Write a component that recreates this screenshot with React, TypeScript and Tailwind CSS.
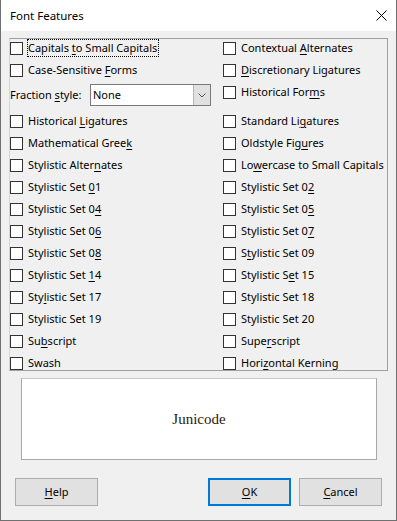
import React from "react";

type L = [string, string, string];

const left: (L | "combo")[] = [
  ["Capitals ", "t", "o Small Capitals"],
  ["Case-Sensitive ", "F", "orms"],
  "combo",
  ["Historical ", "L", "igatures"],
  ["Mathematical Gree", "k", ""],
  ["Stylistic Alter", "n", "ates"],
  ["Stylistic Set ", "0", "1"],
  ["Stylistic Set 0", "4", ""],
  ["Stylistic Set 0", "6", ""],
  ["Stylistic Set 0", "8", ""],
  ["Stylistic Set ", "1", "4"],
  ["Sty", "l", "istic Set 17"],
  ["Stylistic Set 19", "", ""],
  ["Su", "b", "script"],
  ["Swash", "", ""],
];

const right: L[] = [
  ["Contextual ", "A", "lternates"],
  ["", "D", "iscretionary Ligatures"],
  ["Historical For", "m", "s"],
  ["Standard Li", "g", "atures"],
  ["Oldstyle Fig", "u", "res"],
  ["Lo", "w", "ercase to Small Capitals"],
  ["Stylistic Set 0", "2", ""],
  ["Stylistic Set 0", "5", ""],
  ["Stylistic Set 0", "7", ""],
  ["S", "t", "ylistic Set 09"],
  ["Stylistic S", "e", "t 15"],
  ["Stylistic Set 18", "", ""],
  ["Stylistic Set 20", "", ""],
  ["Supe", "r", "script"],
  ["Hori", "z", "ontal Kerning"],
];

function Label({ l }: { l: L }) {
  return (
    <>
      {l[0]}
      {l[1] && <span className="underline decoration-1 underline-offset-[2px]">{l[1]}</span>}
      {l[2]}
    </>
  );
}

function Check({ l, focus }: { l: L; focus?: boolean }) {
  return (
    <div className="flex items-center h-[18px]">
      <span className="w-[13px] h-[13px] border border-[#333333] bg-white shrink-0" />
      <span
        className={
          "ml-[4px] pl-[1px] pr-[2px] h-[18px] leading-[18px] whitespace-nowrap " +
          (focus ? "outline-1 outline-dotted outline-black [outline-offset:-1px]" : "")
        }
      >
        <Label l={l} />
      </span>
    </div>
  );
}

function Combo() {
  return (
    <div className="flex items-start h-[25px]">
      <div className="w-[80px] h-[24px] flex items-center whitespace-nowrap">
        <span>
          {"Fraction "}
          <span className="underline decoration-1 underline-offset-[2px]">s</span>
          {"tyle:"}
        </span>
      </div>
      <div className="mt-[1px] w-[121px] h-[22px] border border-[#7a7a7a] bg-white flex">
        <div className="flex-1 flex items-center pl-[2px]">None</div>
        <div className="w-[17px] h-full bg-[#e1e1e1] border-l border-[#b5b5b5] flex items-center justify-center">
          <svg width="8" height="5" viewBox="0 0 8 5">
            <path d="M0.5 0.5 L4 4 L7.5 0.5" fill="none" stroke="#505050" strokeWidth="1" />
          </svg>
        </div>
      </div>
    </div>
  );
}

export default function App() {
  return (
    <div className="w-[397px] h-[521px] bg-[#f0f0f0] border-x border-b border-[#707070] flex flex-col text-[11px] text-black [font-family:'Noto_Sans',sans-serif]">
      <div className="h-[31px] bg-white flex items-center justify-between pl-[9px] pr-[9px] shrink-0">
        <span className="text-[11.5px]">Font Features</span>
        <svg width="11" height="11" viewBox="0 0 11 11">
          <path d="M0.5 0.5 L10.5 10.5 M10.5 0.5 L0.5 10.5" stroke="#000" strokeWidth="1" />
        </svg>
      </div>
      <div className="ml-[8px] mt-[7px] w-[379px] h-[333px] border border-[#a0a0a0] border-l-[#d6d6d6] overflow-hidden flex flex-col gap-[4px] shrink-0">
        {left.map((lv, i) => (
          <div key={i} className={"grid grid-cols-[213px_1fr] shrink-0 " + (lv === "combo" ? "h-[25px]" : "h-[18px]")}>
            <div>{lv === "combo" ? <Combo /> : <Check l={lv} focus={i === 0} />}</div>
            <div>
              <Check l={right[i]} />
            </div>
          </div>
        ))}
      </div>
      <div className="ml-[20px] mt-[7px] w-[356px] h-[82px] bg-white border border-[#a8a8a8] border-t-[#c8c8c8] flex items-center justify-center shrink-0">
        <span className="text-[15px] text-[#2b1a0e] [font-family:'Liberation_Serif',serif]">Junicode</span>
      </div>
      <div className="mt-[18px] px-[14px] flex items-center shrink-0">
        <div className="w-[83px] h-[28px] bg-[#e1e1e1] border border-[#adadad] flex items-center justify-center">
          <span>
            <span className="underline decoration-1 underline-offset-[2px]">H</span>elp
          </span>
        </div>
        <div className="flex-1" />
        <div className="w-[83px] h-[28px] bg-[#e1e1e1] border-2 border-[#0078d7] flex items-center justify-center">
          <span>
            <span className="underline decoration-1 underline-offset-[2px]">O</span>K
          </span>
        </div>
        <div className="w-[83px] h-[28px] ml-[8px] bg-[#e1e1e1] border border-[#adadad] flex items-center justify-center">
          <span>
            <span className="underline decoration-1 underline-offset-[2px]">C</span>ancel
          </span>
        </div>
      </div>
    </div>
  );
}
